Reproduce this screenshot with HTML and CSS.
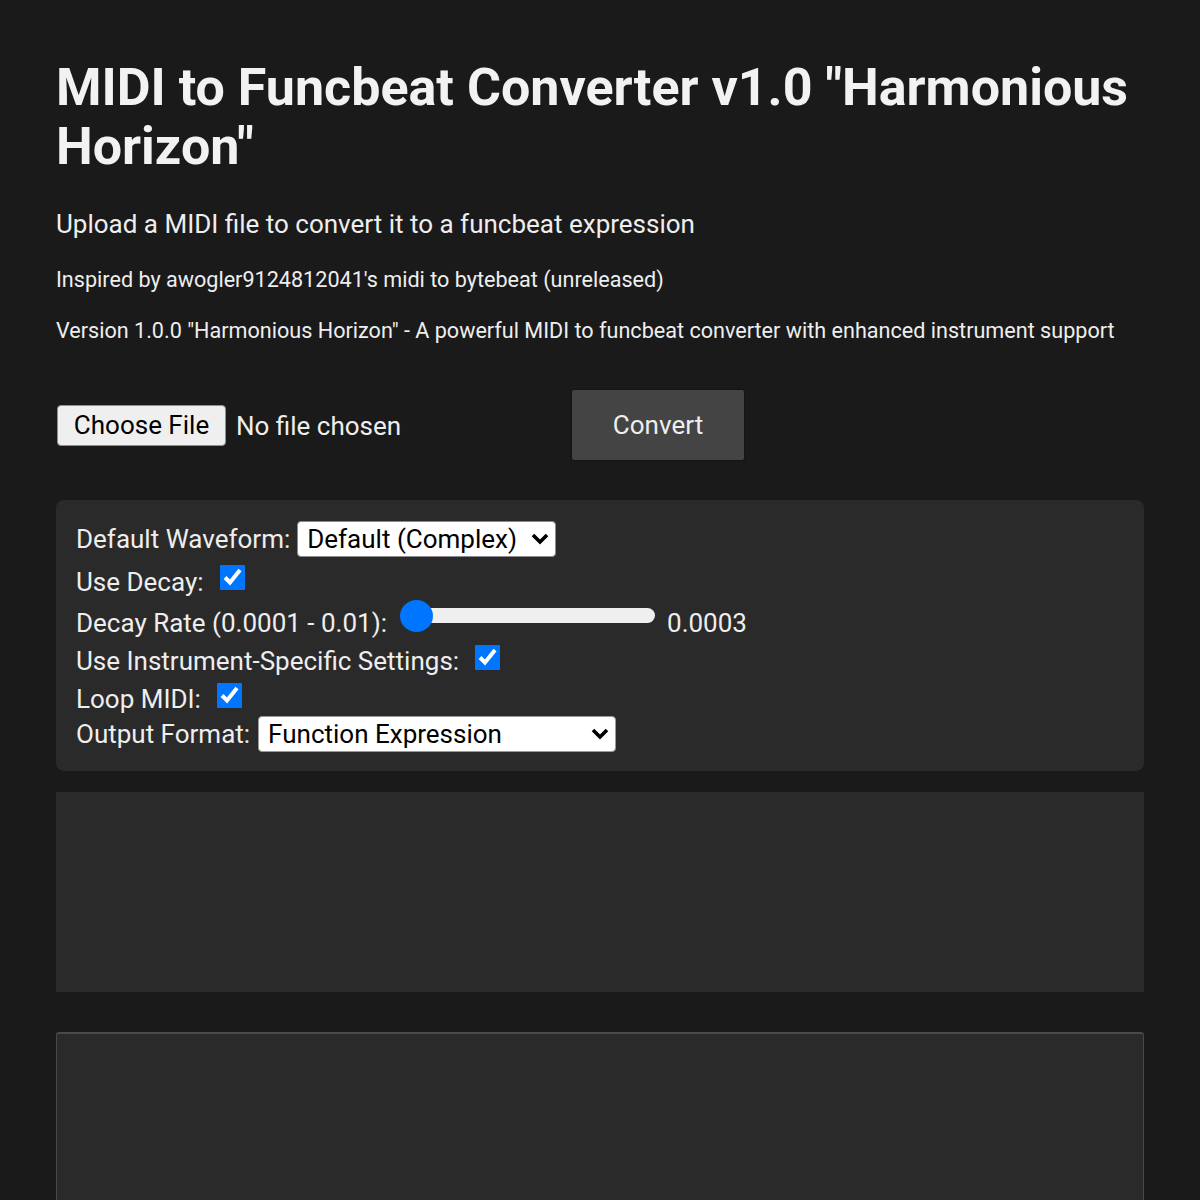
FILE: index.html
```html
<!DOCTYPE html>
<html>
<head>
	<meta name="viewport" content="width=device-width, initial-scale=1">
	<title>MIDI to Funcbeat Converter</title>
<link rel="stylesheet" href="styles.css">
</head>
<body>

<div class="page">
	<h1>MIDI to Funcbeat Converter v1.0 "Harmonious Horizon"</h1>
	<p class="lead">Upload a MIDI file to convert it to a funcbeat expression</p>
	<p class="note">Inspired by awogler9124812041's midi to bytebeat (unreleased)</p>
	<p class="note note-version">Version 1.0.0 "Harmonious Horizon" - A powerful MIDI to funcbeat converter with enhanced instrument support</p>

	<div class="upload">
		<input type="file" id="midiFile" accept=".mid,.midi">
		<button id="convertBtn" class="convert">Convert</button>
	</div>

	<div class="options">
		<div class="row row-wave">
			<label for="waveform">Default Waveform:</label>
			<span class="select-wrap wave-wrap">
				<select id="waveform">
					<option>Default (Complex)</option>
					<option>Sine</option>
					<option>Square</option>
					<option>Sawtooth</option>
					<option>Triangle</option>
				</select>
				<svg class="chevron" width="18" height="12" viewBox="0 0 18 12"><path d="M2 2 L9 9 L16 2" fill="none" stroke="#000" stroke-width="3.6"/></svg>
			</span>
		</div>
		<div class="row row-decay">
			<label for="useDecay">Use Decay:</label>
			<input type="checkbox" id="useDecay" checked>
		</div>
		<div class="row row-rate">
			<label for="decayRate">Decay Rate (0.0001 - 0.01):</label>
			<input type="range" id="decayRate" class="rate" min="0.0001" max="0.01" step="0.0001" value="0.0003">
			<span id="decayValue">0.0003</span>
		</div>
		<div class="row row-inst">
			<label for="useInst">Use Instrument-Specific Settings:</label>
			<input type="checkbox" id="useInst" checked>
		</div>
		<div class="row row-loop">
			<label for="loopMidi">Loop MIDI:</label>
			<input type="checkbox" id="loopMidi" checked>
		</div>
		<div class="row row-format">
			<label for="outFormat">Output Format:</label>
			<span class="select-wrap format-wrap">
				<select id="outFormat">
					<option>Function Expression</option>
					<option>Raw Expression</option>
				</select>
				<svg class="chevron" width="18" height="12" viewBox="0 0 18 12"><path d="M2 2 L9 9 L16 2" fill="none" stroke="#000" stroke-width="3.6"/></svg>
			</span>
		</div>
	</div>

	<div id="output" class="output"></div>

	<textarea id="result" class="result" readonly></textarea>
</div>

</body>
</html>
```

FILE: styles.css
```css
body{
	margin: 0;
	padding: 0;
	background-color: #1a1a1a;
	color: #eeeeee;
	font-family: Roboto, "Liberation Sans", sans-serif;
}

.page{
	padding: 0 56px;
}

h1{
	font-size: 52px;
	line-height: 59px;
	font-weight: bold;
	margin: 58px 0 33px 0;
	color: #f2f2f2;
}

.lead{
	font-size: 26px;
	line-height: 30px;
	margin: 0 0 28px 0;
}

.note{
	font-size: 21.6px;
	line-height: 25px;
	margin: 0;
}

.note-version{
	margin-top: 26px;
}

.upload{
	display: flex;
	align-items: center;
	margin-top: 47px;
}

#midiFile{
	width: 516px;
	font-family: Roboto, "Liberation Sans", sans-serif;
	font-size: 26px;
	color: #eeeeee;
}

#midiFile::file-selector-button{
	font-family: Roboto, "Liberation Sans", sans-serif;
	font-size: 26px;
	color: #000;
	background-color: #efefef;
	border: 1.5px solid #8f8f8f;
	border-radius: 4px;
	width: 169px;
	height: 41px;
	padding: 0;
	margin: 0 10px 0 1px;
}

.convert{
	font-family: Roboto, "Liberation Sans", sans-serif;
	font-size: 26px;
	color: #eeeeee;
	background-color: #444444;
	border: none;
	border-radius: 2px;
	width: 172px;
	height: 70px;
	box-shadow: 0 0 2px rgba(0,0,0,0.6);
}

.options{
	margin-top: 40px;
	background-color: #2a2a2a;
	border-radius: 8px;
	padding: 20px;
	font-size: 26px;
}

.row{
	display: flex;
	align-items: center;
}

.row label{
	line-height: 30px;
}

.row-wave{ height: 38px; }
.row-decay{ height: 47px; }
.row-rate{ height: 35px; }
.row-inst{ height: 42px; }
.row-loop{ height: 34px; }
.row-format{ height: 35px; }

.select-wrap{
	position: relative;
	display: inline-block;
}

select{
	-webkit-appearance: none;
	appearance: none;
	font-family: Roboto, "Liberation Sans", sans-serif;
	font-size: 26px;
	color: #000;
	background-color: #fff;
	border: 1.5px solid #8a8a8a;
	border-radius: 4px;
	height: 36px;
	padding: 0 38px 0 9px;
	display: block;
}

.chevron{
	position: absolute;
	right: 7px;
	top: 12px;
	pointer-events: none;
}

.wave-wrap{
	margin-left: 7px;
}

.format-wrap{
	margin-left: 8px;
}

.format-wrap select{
	width: 358px;
	border-color: #9a9a9a;
}

input[type=checkbox]{
	width: 25px;
	height: 25px;
	margin: 0 0 8px 16px;
	accent-color: #0075ff;
}

.rate{
	-webkit-appearance: none;
	appearance: none;
	width: 254px;
	height: 15px;
	background-color: #efefef;
	border: none;
	border-radius: 8px;
	margin: 0 12px 14px 14px;
}

.rate::-webkit-slider-thumb{
	-webkit-appearance: none;
	width: 33px;
	height: 32px;
	margin-left: -5px;
	border-radius: 50%;
	background-color: #0075ff;
	border: none;
}

.output{
	margin-top: 21px;
	height: 200px;
	background-color: #2a2a2a;
}

.result{
	display: block;
	box-sizing: border-box;
	width: 100%;
	height: 320px;
	margin-top: 40px;
	background-color: #2a2a2a;
	border: 1.5px solid #4a4a4a;
	border-top-width: 2px;
	border-radius: 3px;
	color: #eee;
	resize: vertical;
}
```
